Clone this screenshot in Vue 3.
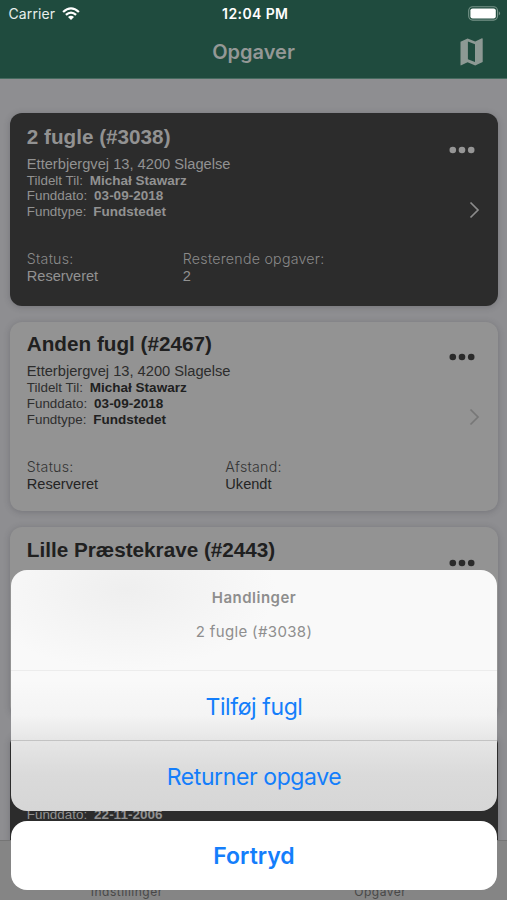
<script setup>
const cards = [
  { title: '2 fugle (#3038)', dark: true, address: 'Etterbjergvej 13, 4200 Slagelse', assigned: 'Michał Stawarz', date: '03-09-2018', type: 'Fundstedet', label: 'Resterende opgaver:', value: '2' },
  { title: 'Anden fugl (#2467)', address: 'Etterbjergvej 13, 4200 Slagelse', assigned: 'Michał Stawarz', date: '03-09-2018', type: 'Fundstedet', label: 'Afstand:', value: 'Ukendt' },
  { title: 'Lille Præstekrave (#2443)' },
  { title: '', dark: true, date: '22-11-2006' },
]
</script>

<template>
  <div class="phone">
    <header class="header">
      <div class="status-bar">
        <div class="carrier">
          <span>Carrier</span>
          <svg width="18" height="13" viewBox="0 0 18 13">
            <g fill="none" stroke="#fff" stroke-width="2.3">
              <path d="M1.1 5Q9-2.2 16.9 5" />
              <path d="M3.9 7.9Q9 3.3 14.1 7.9" />
            </g>
            <path d="M6 9.9Q9 7.4 12 9.9L9 12.9Z" fill="#fff" />
          </svg>
        </div>
        <span class="clock">12:04 PM</span>
        <svg class="battery" width="33" height="15" viewBox="0 0 33 15">
          <rect x=".7" y=".7" width="28.8" height="13.4" rx="4" fill="none" stroke="#779489" stroke-width="1.1" />
          <rect x="2.4" y="2.4" width="25.4" height="10" rx="2.2" fill="#fff" />
          <path d="M30.8 5.2Q33.4 7.4 30.8 9.6Z" fill="#779489" />
        </svg>
      </div>
      <div class="nav">
        <h1>Opgaver</h1>
        <svg class="map" width="23" height="28" viewBox="0 0 23 28">
          <path fill-rule="evenodd" d="M.5 3.8L7.6.4 15.2 3.4 21.9.2Q22.7 0 22.7.9V23.9L15.2 27.5 7.6 24.2 1.2 27.3Q.5 27.6.5 26.8ZM7.9 3.6V21.2L15 24.1V6.2Z" />
        </svg>
      </div>
    </header>

    <main class="list">
      <article v-for="(card, i) in cards" :key="i" class="card" :class="{ dark: card.dark }">
        <h2>{{ card.title }}</h2>
        <p class="address">{{ card.address }}</p>
        <p class="row"><template v-if="card.assigned"><span>Tildelt Til:</span><b>{{ card.assigned }}</b></template></p>
        <p class="row"><template v-if="card.date"><span>Funddato:</span><b>{{ card.date }}</b></template></p>
        <p class="row"><template v-if="card.type"><span>Fundtype:</span><b>{{ card.type }}</b></template></p>
        <div v-if="card.label" class="facts">
          <div><p class="label">Status:</p><p class="value">Reserveret</p></div>
          <div><p class="label">{{ card.label }}</p><p class="value">{{ card.value }}</p></div>
        </div>
        <svg class="dots" width="26" height="8" viewBox="0 0 26 8">
          <circle cx="3.8" cy="4" r="3.3" /><circle cx="13" cy="4" r="3.3" /><circle cx="22.2" cy="4" r="3.3" />
        </svg>
        <svg class="chevron" width="11" height="18" viewBox="0 0 11 18">
          <path d="M1.5 1.5L9 9 1.5 16.5" fill="none" stroke-width="1.7" />
        </svg>
      </article>
    </main>

    <nav class="tabs"><span>Indstillinger</span><span>Opgaver</span></nav>

    <div class="overlay">
      <section class="sheet">
        <div class="sheet-head">
          <strong>Handlinger</strong>
          <span>2 fugle (#3038)</span>
        </div>
        <button class="add">Tilføj fugl</button>
        <button class="return">Returner opgave</button>
      </section>
      <button class="cancel">Fortryd</button>
    </div>
  </div>
</template>

<style>
body { margin: 0; }
</style>

<style scoped>
.phone {
  position: relative;
  display: flex;
  flex-direction: column;
  width: 507px;
  height: 900px;
  overflow: hidden;
  background: #8e8e91;
  font-family: Inter, sans-serif;
}
h1, h2, p { margin: 0; }
.header {
  flex: none;
  box-sizing: border-box;
  height: 79px;
  background: #1f4b3e;
  border-bottom: 1px solid #466b60;
}
.status-bar {
  display: grid;
  grid-template-columns: 1fr auto 1fr;
  align-items: center;
  height: 27px;
  padding: 0 6px 0 8.5px;
  color: #fff;
  font-size: 14px;
}
.carrier { display: flex; align-items: center; gap: 7px; }
.carrier span { letter-spacing: 0.1px; color: #e8efec; }
.clock { font-weight: 600; font-size: 14px; letter-spacing: 0.4px; padding-left: 1px; }
.battery { justify-self: end; }
.nav {
  display: grid;
  grid-template-columns: 1fr auto 1fr;
  align-items: center;
  height: 50px;
  padding-right: 24px;
}
h1 {
  grid-column: 2;
  padding-left: 24px;
  font-size: 20px;
  font-weight: 600;
  line-height: 50px;
  color: #949896;
}
.map { justify-self: end; fill: #8d9994; }
.list {
  flex: 1;
  min-height: 0;
  overflow: hidden;
  padding: 34px 9px 0 9.5px;
  display: flex;
  flex-direction: column;
  gap: 16px;
}
.card {
  position: relative;
  flex: none;
  box-sizing: border-box;
  height: 189.5px;
  padding: 10.5px 17.3px 0;
  border-radius: 12px;
  background: #939393;
  box-shadow: 0 1px 6px rgba(40, 40, 50, 0.25);
  color: #202020;
  font-family: "Liberation Sans", sans-serif;
}
.card.dark { background: #2c2c2c; color: #929292; }
.card:first-child { height: 192.5px; padding-top: 11.5px; }
h2 { height: 24px; font-size: 20.7px; line-height: 24px; }
.address { height: 17px; margin-top: 7.4px; font-size: 14.67px; line-height: 17px; color: #2c2c2c; }
.card:first-child .address { margin-top: 7px; }
.row { display: flex; gap: 7px; height: 15.6px; font-size: 13.4px; line-height: 15.6px; color: #2e2e2e; }
.row b { color: #202020; font-size: 13.5px; }
.facts { display: flex; margin-top: 30.4px; }
.facts > div { width: 198.5px; }
.card:first-child .facts > div:first-child { width: 156px; }
.label { font-family: Inter, sans-serif; font-weight: 300; font-size: 14.2px; letter-spacing: 0.25px; line-height: 17px; color: #333; white-space: nowrap; }
.value { font-size: 14.6px; line-height: 19px; color: #242424; }
.dark .address, .dark .row, .dark .row b, .dark .value { color: #929292; }
.dark .label { color: #8a8a8a; }
.dots { position: absolute; right: 23.5px; top: 31.5px; fill: #2a2a2a; }
.dark .dots { top: 33px; fill: #969696; }
.chevron { position: absolute; right: 18.5px; top: 86px; stroke: #777; }
.dark .chevron { top: 87.5px; stroke: #8c8c8c; }
.tabs {
  flex: none;
  box-sizing: border-box;
  display: grid;
  grid-template-columns: 1fr 1fr;
  align-items: end;
  height: 60px;
  border-top: 1px solid #757575;
  background: #858585;
  color: #484848;
  font-size: 12px;
  letter-spacing: 0.5px;
  line-height: 16px;
  text-align: center;
}
.overlay {
  position: absolute;
  left: 11px;
  right: 10px;
  bottom: 10px;
  display: flex;
  flex-direction: column;
  gap: 10px;
}
.sheet {
  display: flex;
  flex-direction: column;
  height: 241px;
  overflow: hidden;
  border-radius: 16px;
  background:
    radial-gradient(ellipse 150px 80px at 115px 20px, rgba(232, 232, 232, 0.6), transparent),
    linear-gradient(#f9f9f9 0, #f9f9f9 110px, #f4f4f4 145px, #e6e6e6 170px, #dadada 205px, #d6d6d6 241px);
}
.sheet-head {
  box-sizing: border-box;
  display: flex;
  flex-direction: column;
  align-items: center;
  height: 100px;
  padding-top: 18px;
  color: #8e8e8e;
  font-size: 15px;
  line-height: 20px;
  gap: 14px;
}
.sheet-head strong { font-weight: 600; letter-spacing: 0.5px; }
.sheet-head span { letter-spacing: 0.35px; }
button {
  box-sizing: border-box;
  margin: 0;
  padding: 0;
  border: 0;
  background: none;
  color: #147efb;
  font-family: Inter, sans-serif;
  font-size: 23px;
}
.sheet button { height: 70px; padding-top: 2px; border-top: 1px solid #ececec; letter-spacing: -0.4px; }
.sheet .return { height: 71px; border-top-color: #c3c3c3; }
.cancel { height: 69px; border-radius: 16px; background: #fff; font-weight: 600; }
</style>
